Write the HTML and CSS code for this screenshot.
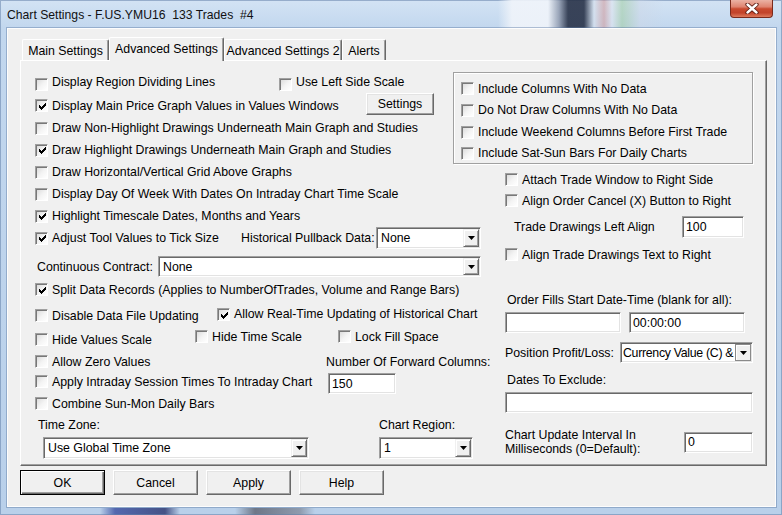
FILE: index.html
```html
<!DOCTYPE html>
<html>
<head>
<meta charset="utf-8">
<title>Chart Settings</title>
<link rel="stylesheet" href="styles.css">
</head>
<body>
<div class="window">
  <div class="titlebar">
    <span class="title">Chart Settings - F.US.YMU16&nbsp; 133 Trades&nbsp; #4</span>
    <div class="close">
      <svg width="14" height="11" viewBox="0 0 14 11"><path d="M2.5 1.5 L11.5 9.5 M11.5 1.5 L2.5 9.5" stroke="#5a1a10" stroke-width="4.2" stroke-linecap="round"/><path d="M2.5 1.5 L11.5 9.5 M11.5 1.5 L2.5 9.5" stroke="#fff" stroke-width="2.4" stroke-linecap="round"/></svg>
    </div>
  </div>
  <div class="client">
    <div class="tabs">
      <div class="tab t1">Main Settings</div>
      <div class="tab sel t2">Advanced Settings</div>
      <div class="tab t3">Advanced Settings 2</div>
      <div class="tab t4">Alerts</div>
    </div>
    <div class="panel">
      <div class="left">
        <div class="row h22 first">
          <label class="chk w244"><span class="cb"></span><span class="raise">Display Region Dividing Lines</span></label>
          <label class="chk"><span class="cb"></span><span class="raise">Use Left Side Scale</span></label>
        </div>
        <div class="row h23">
          <label class="chk w331"><span class="cb"><svg class="tick" width="7" height="7" viewBox="0 0 7 7"><polygon points="0,2 1,2 1,3 2,3 2,4 3,4 3,3 4,3 4,2 5,2 5,1 6,1 6,0 7,0 7,3 6,3 6,4 5,4 5,5 4,5 4,6 3,6 3,7 2,7 2,6 1,6 1,5 0,5"/></svg></span>Display Main Price Graph Values in Values Windows</label>
          <div class="btn settings">Settings</div>
        </div>
        <div class="row h22">
          <label class="chk"><span class="cb"></span>Draw Non-Highlight Drawings Underneath Main Graph and Studies</label>
        </div>
        <div class="row h22">
          <label class="chk"><span class="cb"><svg class="tick" width="7" height="7" viewBox="0 0 7 7"><polygon points="0,2 1,2 1,3 2,3 2,4 3,4 3,3 4,3 4,2 5,2 5,1 6,1 6,0 7,0 7,3 6,3 6,4 5,4 5,5 4,5 4,6 3,6 3,7 2,7 2,6 1,6 1,5 0,5"/></svg></span>Draw Highlight Drawings Underneath Main Graph and Studies</label>
        </div>
        <div class="row h22">
          <label class="chk"><span class="cb"></span>Draw Horizontal/Vertical Grid Above Graphs</label>
        </div>
        <div class="row h22">
          <label class="chk"><span class="cb"></span>Display Day Of Week With Dates On Intraday Chart Time Scale</label>
        </div>
        <div class="row h22">
          <label class="chk"><span class="cb"><svg class="tick" width="7" height="7" viewBox="0 0 7 7"><polygon points="0,2 1,2 1,3 2,3 2,4 3,4 3,3 4,3 4,2 5,2 5,1 6,1 6,0 7,0 7,3 6,3 6,4 5,4 5,5 4,5 4,6 3,6 3,7 2,7 2,6 1,6 1,5 0,5"/></svg></span>Highlight Timescale Dates, Months and Years</label>
        </div>
        <div class="row h22">
          <label class="chk w206"><span class="cb"><svg class="tick" width="7" height="7" viewBox="0 0 7 7"><polygon points="0,2 1,2 1,3 2,3 2,4 3,4 3,3 4,3 4,2 5,2 5,1 6,1 6,0 7,0 7,3 6,3 6,4 5,4 5,5 4,5 4,6 3,6 3,7 2,7 2,6 1,6 1,5 0,5"/></svg></span>Adjust Tool Values to Tick Size</label>
          <span class="lbl w135">Historical Pullback Data:</span>
          <div class="select sunken w105 s22"><span class="val">None</span><span class="drop"><svg width="7" height="4" viewBox="0 0 7 4"><polygon points="0,0 7,0 3.5,4"/></svg></span></div>
        </div>
        <div class="row h23 mt6">
          <span class="lbl w121 ml2">Continuous Contract:</span>
          <div class="select sunken w323 s21"><span class="val">None</span><span class="drop"><svg width="7" height="4" viewBox="0 0 7 4"><polygon points="0,0 7,0 3.5,4"/></svg></span></div>
        </div>
        <div class="row h23">
          <label class="chk"><span class="cb"><svg class="tick" width="7" height="7" viewBox="0 0 7 7"><polygon points="0,2 1,2 1,3 2,3 2,4 3,4 3,3 4,3 4,2 5,2 5,1 6,1 6,0 7,0 7,3 6,3 6,4 5,4 5,5 4,5 4,6 3,6 3,7 2,7 2,6 1,6 1,5 0,5"/></svg></span>Split Data Records (Applies to NumberOfTrades, Volume and Range Bars)</label>
        </div>
        <div class="row h27">
          <label class="chk w182 low"><span class="cb"></span>Disable Data File Updating</label>
          <label class="chk"><span class="cb"><svg class="tick" width="7" height="7" viewBox="0 0 7 7"><polygon points="0,2 1,2 1,3 2,3 2,4 3,4 3,3 4,3 4,2 5,2 5,1 6,1 6,0 7,0 7,3 6,3 6,4 5,4 5,5 4,5 4,6 3,6 3,7 2,7 2,6 1,6 1,5 0,5"/></svg></span><span class="raise1">Allow Real-Time Updating of Historical Chart</span></label>
        </div>
        <div class="row h23">
          <label class="chk w160"><span class="cb"></span>Hide Values Scale</label>
          <label class="chk w143 up"><span class="cb"></span>Hide Time Scale</label>
          <label class="chk up"><span class="cb"></span>Lock Fill Space</label>
        </div>
        <div class="row h21">
          <label class="chk w291"><span class="cb"></span>Allow Zero Values</label>
          <span class="lbl">Number Of Forward Columns:</span>
        </div>
        <div class="row h19">
          <label class="chk w293"><span class="cb"></span>Apply Intraday Session Times To Intraday Chart</label>
          <div class="input sunken w68 s21 down">150</div>
        </div>
        <div class="row h25">
          <label class="chk"><span class="cb"></span>Combine Sun-Mon Daily Bars</label>
        </div>
        <div class="row h18">
          <span class="lbl w341 ml3">Time Zone:</span>
          <span class="lbl">Chart Region:</span>
        </div>
        <div class="row h22 mt3">
          <div class="select sunken w266 s22 ml8"><span class="val">Use Global Time Zone</span><span class="drop"><svg width="7" height="4" viewBox="0 0 7 4"><polygon points="0,0 7,0 3.5,4"/></svg></span></div>
          <div class="select sunken w94 s22 ml70"><span class="val">1</span><span class="drop"><svg width="7" height="4" viewBox="0 0 7 4"><polygon points="0,0 7,0 3.5,4"/></svg></span></div>
        </div>
      </div>
      <div class="right">
        <div class="group">
          <div class="row h21"><label class="chk"><span class="cb"></span>Include Columns With No Data</label></div>
          <div class="row h22"><label class="chk"><span class="cb"></span>Do Not Draw Columns With No Data</label></div>
          <div class="row h22"><label class="chk"><span class="cb"></span>Include Weekend Columns Before First Trade</label></div>
          <div class="row h20"><label class="chk"><span class="cb"></span>Include Sat-Sun Bars For Daily Charts</label></div>
        </div>
        <div class="row h21 mt5"><label class="chk"><span class="cb"></span>Attach Trade Window to Right Side</label></div>
        <div class="row h21"><label class="chk"><span class="cb"></span>Align Order Cancel (X) Button to Right</label></div>
        <div class="row h32">
          <span class="lbl w168 ml9">Trade Drawings Left Align</span>
          <div class="input sunken w62 s22">100</div>
        </div>
        <div class="row h23"><label class="chk"><span class="cb"></span>Align Trade Drawings Text to Right</label></div>
        <div class="caption mt26 ml2">Order Fills Start Date-Time (blank for all):</div>
        <div class="row h21 mt4 gap8">
          <div class="input sunken w116 s21"></div>
          <div class="input sunken w116 s21">00:00:00</div>
        </div>
        <div class="row h21 mt9">
          <span class="lbl w115">Position Profit/Loss:</span>
          <div class="select sunken w133 s21"><span class="val tight">Currency Value (C) &amp;</span><span class="drop boxed"><svg width="7" height="4" viewBox="0 0 7 4"><polygon points="0,0 7,0 3.5,4"/></svg></span></div>
        </div>
        <div class="caption mt9 ml2">Dates To Exclude:</div>
        <div class="input sunken wfull s21 mt4"></div>
        <div class="row h28 mt15">
          <span class="lbl2 w179">Chart Update Interval In<br>Milliseconds (0=Default):</span>
          <div class="input sunken w69 s21">0</div>
        </div>
      </div>
    </div>
    <div class="buttons">
      <div class="btn wide default">OK</div>
      <div class="btn wide">Cancel</div>
      <div class="btn wide">Apply</div>
      <div class="btn wide">Help</div>
    </div>
  </div>
</div>
</body>
</html>
```

FILE: styles.css
```css
* { box-sizing: border-box; }
html, body { margin: 0; padding: 0; }
body { width: 782px; height: 515px; overflow: hidden; background: #bcd2ea; }

.window {
  width: 782px;
  height: 515px;
  display: flex;
  flex-direction: column;
  font-family: "Liberation Sans", Arial, sans-serif;
  font-size: 12.33px;
  color: #000;
  background:
    linear-gradient(90deg, rgba(0,0,0,0) 100px, rgba(40,60,150,.7) 115px, rgba(30,40,100,.75) 165px, rgba(0,0,0,0) 180px, rgba(0,0,0,0) 235px, rgba(60,60,70,.6) 255px, rgba(90,90,100,.45) 300px, rgba(0,0,0,0) 315px) left bottom / 100% 7px no-repeat,
    linear-gradient(180deg, #d3e3f4 0, #c2d7ee 28px, #b9d0ea 100%);
  box-shadow: inset 0 0 0 1px rgba(100,130,170,.55);
}

.titlebar {
  height: 28px;
  flex: none;
  display: flex;
  justify-content: space-between;
  align-items: flex-start;
  background: linear-gradient(90deg, rgba(255,255,255,0) 498px, rgba(240,244,250,.9) 512px, rgba(240,244,250,.9) 548px, rgba(140,150,170,.8) 559px, rgba(40,50,72,.9) 568px, rgba(40,50,72,.9) 584px, rgba(215,225,238,.7) 594px, rgba(210,150,150,.55) 604px, rgba(225,230,240,.6) 612px, rgba(160,205,160,.55) 622px, rgba(205,215,230,.45) 640px, rgba(255,255,255,0) 664px);
}
.title { padding: 7px 0 0 7px; line-height: 16px; font-size: 12.2px; color: #111; }
.close {
  width: 43px;
  height: 18px;
  margin-right: 9px;
  border: 1px solid #7a2a1c;
  border-top: none;
  border-radius: 0 0 4px 4px;
  background: linear-gradient(180deg, #ebb2a4 0, #df8470 40%, #c94a2f 52%, #c2432a 75%, #de7a5c 100%);
  display: flex;
  align-items: center;
  justify-content: center;
}

.client {
  margin-left: 7px;
  width: 769px;
  height: 479px;
  flex: none;
  background: #f0f0f0;
  border: 1px solid #fdfdfd;
  box-shadow: 0 0 0 1px rgba(95,125,165,.45);
}

.tabs { display: flex; align-items: flex-end; margin: 8px 0 0 14px; height: 23px; }
.tab {
  height: 21px;
  display: flex;
  align-items: center;
  justify-content: center;
  white-space: nowrap;
  background: #f0f0f0;
  border-top: 1px solid #fff;
  border-left: 1px solid #fff;
  border-right: 1px solid #696969;
  box-shadow: inset -1px 0 0 #a0a0a0;
  border-radius: 2px 2px 0 0;
  flex: none;
  padding-top: 1px;
}
.t1 { width: 87px; }
.t2 { width: 115px; }
.t3 { width: 118px; }
.t4 { width: 44px; }
.tab.sel { height: 24px; margin-bottom: -1px; padding-top: 0; padding-bottom: 2px; position: relative; z-index: 1; }

.panel {
  margin-left: 12px;
  width: 747px;
  height: 406px;
  border: 1px solid;
  border-color: #fff #696969 #696969 #fff;
  box-shadow: inset -1px -1px 0 #a0a0a0;
  display: flex;
  padding-left: 14px;
}
.left { width: 470px; flex: none; padding-top: 11px; display: flex; flex-direction: column; }
.right { width: 248px; flex: none; padding-top: 11px; display: flex; flex-direction: column; }

.row { display: flex; align-items: center; flex: none; }
.h18 { height: 18px; } .h19 { height: 19px; } .h20 { height: 20px; } .h21 { height: 21px; }
.h22 { height: 22px; } .h23 { height: 23px; } .h25 { height: 25px; } .h27 { height: 27px; }
.h28 { height: 28px; } .h32 { height: 32px; }
.mt3 { margin-top: 3px; } .mt4 { margin-top: 4px; } .mt5 { margin-top: 5px; } .mt6 { margin-top: 6px; }
.mt9 { margin-top: 9px; } .mt15 { margin-top: 15px; } .mt26 { margin-top: 26px; }
.ml2 { margin-left: 2px; } .ml3 { margin-left: 3px; } .ml8 { margin-left: 8px; } .ml9 { margin-left: 9px; } .ml70 { margin-left: 70px; }
.gap8 { gap: 8px; }

.w62 { width: 62px; } .w68 { width: 68px; } .w69 { width: 69px; } .w94 { width: 94px; } .w105 { width: 105px; }
.w115 { width: 115px; } .w116 { width: 116px; } .w121 { width: 121px; } .w133 { width: 133px; } .w135 { width: 135px; }
.w143 { width: 143px; } .w160 { width: 160px; } .w168 { width: 168px; } .w179 { width: 179px; } .w182 { width: 182px; }
.w206 { width: 206px; } .w244 { width: 244px; } .w266 { width: 266px; } .w291 { width: 291px; } .w293 { width: 293px; }
.w323 { width: 323px; } .w331 { width: 331px; } .w341 { width: 341px; } .wfull { width: 248px; }
.s21 { height: 21px; } .s22 { height: 22px; }

.chk { display: flex; align-items: center; gap: 4px; white-space: nowrap; flex: none; }
.first .cb { margin-top: 2px; }
.raise { margin-bottom: 2px; }
.raise1 { margin-bottom: 2px; }
.lbl { white-space: nowrap; flex: none; }
.lbl2 { line-height: 14px; flex: none; }
.caption { line-height: 16px; white-space: nowrap; flex: none; }
.low { margin-top: 2px; }
.up { margin-bottom: 6px; }
.down { margin-top: 4px; }

.cb {
  width: 13px;
  height: 13px;
  flex: none;
  border: 1px solid;
  border-color: #a0a0a0 #fff #fff #a0a0a0;
  box-shadow: inset 1px 1px 0 #787878;
  background: linear-gradient(135deg, #d8d8d8 0, #f4f4f4 55%, #fff 100%);
  display: flex;
  align-items: center;
  justify-content: center;
}
.tick { display: block; fill: #000; shape-rendering: crispEdges; margin: 1px 0 0 1px; }

.sunken {
  background: #fff;
  border: 1px solid;
  border-color: #a0a0a0 #fff #fff #a0a0a0;
  box-shadow: inset 1px 1px 0 #696969, inset -1px -1px 0 #e3e3e3;
  flex: none;
}
.input { display: flex; align-items: center; padding-left: 3px; white-space: nowrap; }
.select { display: flex; align-items: stretch; padding: 1px; }
.select .val { flex: 1; display: flex; align-items: center; padding-left: 3px; overflow: hidden; white-space: nowrap; min-width: 0; }
.select .val.tight { padding-left: 1px; letter-spacing: -0.3px; }
.drop {
  width: 16px;
  flex: none;
  background: #f0f0f0;
  border: 1px solid;
  border-color: #f0f0f0 #696969 #696969 #f0f0f0;
  box-shadow: inset 1px 1px 0 #fff, inset -1px -1px 0 #a0a0a0;
  display: flex;
  align-items: center;
  justify-content: center;
}
.drop svg { display: block; fill: #000; }
.drop.boxed { border-color: #8a8a8a; box-shadow: inset 1px 1px 0 #fff; }

.group {
  margin-left: -52px;
  width: 300px;
  height: 92px;
  flex: none;
  border: 1px solid #a0a0a0;
  box-shadow: inset 1px 1px 0 #fff, 1px 1px 0 #fff;
  padding: 5px 0 0 7px;
  display: flex;
  flex-direction: column;
}

.btn {
  display: flex;
  align-items: center;
  justify-content: center;
  background: #f0f0f0;
  border: 1px solid;
  border-color: #fff #696969 #696969 #fff;
  box-shadow: inset -1px -1px 0 #a0a0a0, inset 1px 1px 0 #e3e3e3;
  flex: none;
}
.settings { width: 68px; height: 22px; margin-bottom: 4px; }
.buttons { display: flex; gap: 8px; margin: 4px 0 0 12px; }
.wide { width: 85px; height: 25px; }
.btn.default { border-color: #000; box-shadow: inset 1px 1px 0 #fff, inset -1px -1px 0 #696969, inset -2px -2px 0 #a0a0a0; }
```
